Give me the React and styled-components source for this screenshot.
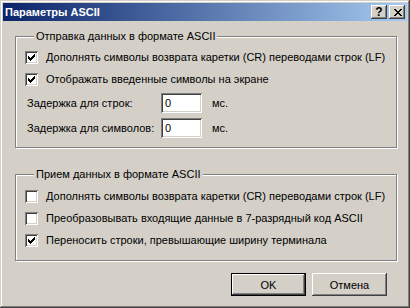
import React from 'react';
import { styled, createGlobalStyle } from 'styled-components';

const GlobalStyle = createGlobalStyle`
   html, body {
      margin: 0;
      padding: 0;
      background: #d4d0c8;
   }
   body {
      font-family: "Liberation Sans", Arial, sans-serif;
      font-size: 11px;
      color: #000;
   }
`;

const CheckMark = () => (
   <svg width="7" height="7" viewBox="0 0 7 7" shapeRendering="crispEdges">
      {[2, 3, 4, 3, 2, 1, 0].map((y, x) => (
         <rect key={x} x={x} y={y} width="1" height="3" fill="#000" />
      ))}
   </svg>
);

const CloseGlyph = () => (
   <svg width="8" height="7" viewBox="0 0 8 7" shapeRendering="crispEdges">
      {[0, 1, 2, 3, 4, 5, 6].map((i) => (
         <React.Fragment key={i}>
            <rect x={i} y={i} width="2" height="1" fill="#000" />
            <rect x={6 - i} y={i} width="2" height="1" fill="#000" />
         </React.Fragment>
      ))}
   </svg>
);

const Checkbox = ({ checked, label }) => (
   <CheckRow>
      <Box>{checked && <CheckMark />}</Box>
      <span>{label}</span>
   </CheckRow>
);

const App = () => {
   return (
      <>
         <GlobalStyle />
         <Window>
            <TitleBar>
               <Title>Параметры ASCII</Title>
               <CaptionButton $help>?</CaptionButton>
               <CaptionButton><CloseGlyph /></CaptionButton>
            </TitleBar>
            <Body>
               <Group>
                  <legend>Отправка данных в формате ASCII</legend>
                  <Checkbox checked label="Дополнять символы возврата каретки (CR) переводами строк (LF)" />
                  <Checkbox checked label="Отображать введенные символы на экране" />
                  <Delays>
                     <span>Задержка для строк:</span>
                     <Edit>0</Edit>
                     <span>мс.</span>
                     <span>Задержка для символов:</span>
                     <Edit>0</Edit>
                     <span>мс.</span>
                  </Delays>
               </Group>
               <Group $second>
                  <legend>Прием данных в формате ASCII</legend>
                  <Checkbox label="Дополнять символы возврата каретки (CR) переводами строк (LF)" />
                  <Checkbox label="Преобразовывать входящие данные в 7-разрядный код ASCII" />
                  <Checkbox checked label="Переносить строки, превышающие ширину терминала" />
               </Group>
               <Buttons>
                  <Button $default>OK</Button>
                  <Button>Отмена</Button>
               </Buttons>
            </Body>
         </Window>
      </>
   )
};

const Window = styled.div`
   width: 410px;
   height: 308px;
   box-sizing: border-box;
   padding: 3px;
   background: #d4d0c8;
   box-shadow: inset -1px -1px #404040, inset 1px 1px #d4d0c8,
      inset -2px -2px #808080, inset 2px 2px #fff;
`;

const TitleBar = styled.div`
   height: 18px;
   display: flex;
   align-items: center;
   gap: 2px;
   padding: 0 2px;
   background: linear-gradient(to right, #0a246a, #a6caf0);
`;

const Title = styled.div`
   flex: 1;
   color: #fff;
   font-weight: bold;
   font-size: 11px;
   line-height: 14px;
   white-space: nowrap;
`;

const CaptionButton = styled.div`
   width: 16px;
   height: 14px;
   box-sizing: border-box;
   display: flex;
   align-items: center;
   justify-content: center;
   background: #d4d0c8;
   box-shadow: inset -1px -1px #404040, inset 1px 1px #fff, inset -2px -2px #808080;
   font-weight: bold;
   font-size: 12px;
   line-height: 14px;
   padding-left: ${({ $help }) => ($help ? '0' : '1px')};
`;

const Body = styled.div`
   padding: 9px 10px 0 12px;
`;

const Group = styled.fieldset`
   margin: ${({ $second }) => ($second ? '20px' : '0')} 0 0 0;
   padding: ${({ $second }) => ($second ? '4px' : '3px')} 8px 9px 9px;
   width: 382px;
   box-sizing: border-box;
   border: 1px solid #808080;
   box-shadow: inset 1px 1px #fff, 1px 1px #fff;
   legend {
      margin-left: 9px;
      padding: 0 2px;
      line-height: 13px;
      background: #d4d0c8;
   }
`;

const CheckRow = styled.div`
   display: flex;
   align-items: center;
   gap: 8px;
   height: 22px;
   white-space: nowrap;
`;

const Box = styled.div`
   width: 13px;
   height: 13px;
   box-sizing: border-box;
   flex: none;
   display: flex;
   align-items: center;
   justify-content: center;
   background: #fff;
   box-shadow: inset 1px 1px #808080, inset -1px -1px #fff,
      inset 2px 2px #404040, inset -2px -2px #d4d0c8;
`;

const Delays = styled.div`
   display: grid;
   grid-template-columns: 124px 41px auto;
   grid-auto-rows: 20px;
   row-gap: 5px;
   column-gap: 10px;
   align-items: center;
   margin: 3px 0 0 2px;
   white-space: nowrap;
`;

const Edit = styled.div`
   height: 20px;
   box-sizing: border-box;
   padding: 0 4px;
   display: flex;
   align-items: center;
   background: #fff;
   box-shadow: inset 1px 1px #808080, inset -1px -1px #fff,
      inset 2px 2px #404040, inset -2px -2px #d4d0c8;
`;

const Buttons = styled.div`
   display: flex;
   justify-content: flex-end;
   gap: 6px;
   margin: 12px 10px 0 0;
`;

const Button = styled.div`
   width: 75px;
   height: 23px;
   box-sizing: border-box;
   display: flex;
   align-items: center;
   justify-content: center;
   background: #d4d0c8;
   border: ${({ $default }) => ($default ? '1px solid #000' : 'none')};
   box-shadow: inset -1px -1px #404040, inset 1px 1px #fff, inset -2px -2px #808080;
`;

export default App
